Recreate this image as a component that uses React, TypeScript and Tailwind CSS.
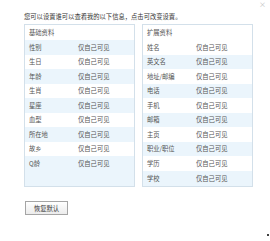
import React from "react";

const left = ["性别", "生日", "年龄", "生肖", "星座", "血型", "所在地", "故乡", "Q龄"];
const right = ["姓名", "英文名", "地址/邮编", "电话", "手机", "邮箱", "主页", "职业/职位", "学历", "学校"];

function Table({ title, rows, alt }: { title: string; rows: string[]; alt: number }) {
  return (
    <div className="flex h-[163px] w-[111px] flex-col border border-[#d3e0ea] bg-white">
      <div className="flex h-[15px] shrink-0 items-center pl-[4px] text-[#555]">{title}</div>
      {rows.map((r, i) => {
        const last = i === rows.length - 1;
        const blue = i % 2 === alt;
        return (
          <div
            key={r}
            className={
              (blue ? "bg-[#ebf5fc] " : "bg-white ") +
              (last ? "flex-1 items-start pt-[3px] " : "h-[14.5px] shrink-0 items-center ") +
              "flex pl-[4px] text-[#555]"
            }
          >
            <span className="w-[49px] shrink-0">{r}</span>
            <span>仅自己可见</span>
          </div>
        );
      })}
    </div>
  );
}

export default function App() {
  return (
    <div
      className="relative h-[241px] w-[270px] overflow-hidden bg-white text-[6.3px] leading-[9px]"
      style={{ fontFamily: '"Noto Sans CJK SC", "Noto Sans", sans-serif' }}
    >
      <div className="absolute right-[4px] top-[0px] text-[7px] text-[#bbb]">×</div>
      <div className="absolute bottom-[5px] right-[1px] h-[2px] w-[2px] rounded-full bg-black" />
      <div className="pl-[24px] pt-[12px]">
        <div className="text-[#333]">您可以设置谁可以查看我的以下信息，点击可改变设置。</div>
        <div className="mt-[3px] flex gap-[7px]">
          <Table title="基础资料" rows={left} alt={0} />
          <Table title="扩展资料" rows={right} alt={1} />
        </div>
        <button className="mt-[14px] ml-[1px] flex h-[14px] w-[43px] items-center justify-center border border-[#a5a5a5] bg-gradient-to-b from-white to-[#ececec] text-[6.3px] text-[#333]">
          恢复默认
        </button>
      </div>
    </div>
  );
}
